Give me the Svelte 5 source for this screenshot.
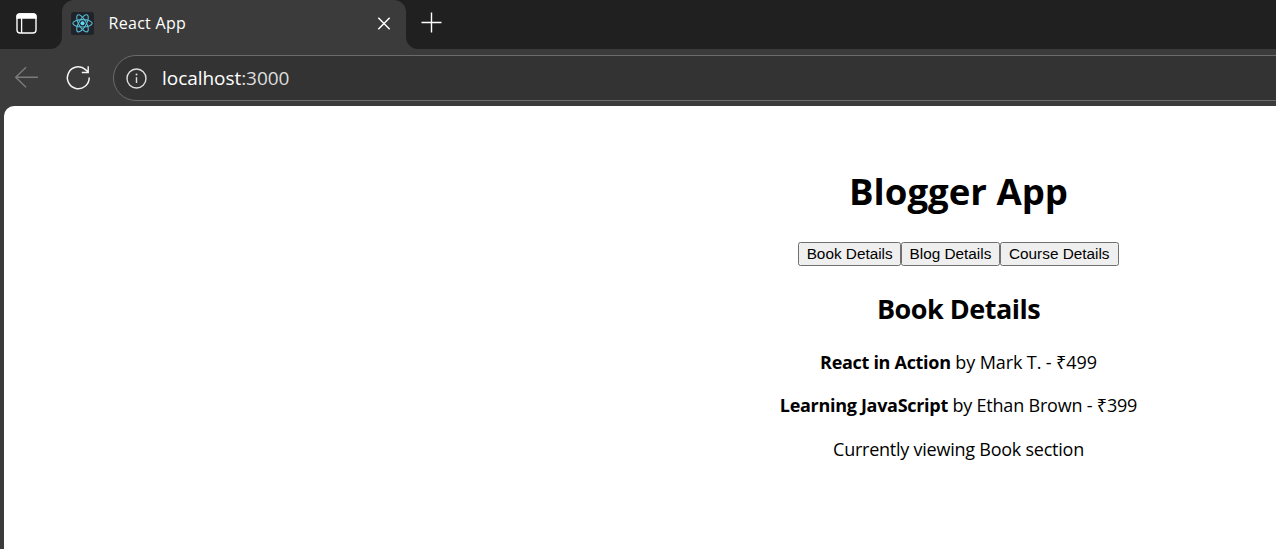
<script>
  const tabs = ['Book Details', 'Blog Details', 'Course Details'];
  const books = [
    { title: 'React in Action', author: 'Mark T.', price: 499 },
    { title: 'Learning JavaScript', author: 'Ethan Brown', price: 399 }
  ];
</script>

<div class="browser">
  <header class="tabstrip">
    <div class="workspace">
      <svg width="23" height="23" viewBox="0 0 23 23" fill="none" stroke="#fff" stroke-width="1.400">
        <rect x="2" y="2" width="19" height="19" rx="3.200" />
        <path d="M2 6V4.500Q2 2 4.500 2H18.500Q21 2 21 4.500V6Z" fill="#fff" />
        <path d="M6.600 6V21" stroke-width="1.300" />
      </svg>
    </div>
    <div class="tab">
      <svg class="favicon" width="23" height="23" viewBox="0 0 23 23" fill="none" stroke="#58bad4" stroke-width="1.100">
        <rect width="23" height="23" rx="2.500" fill="#20242a" stroke="none" />
        <ellipse cx="11.500" cy="11.300" rx="9.700" ry="3.700" />
        <ellipse cx="11.500" cy="11.300" rx="9.700" ry="3.700" transform="rotate(60 11.500 11.300)" />
        <ellipse cx="11.500" cy="11.300" rx="9.700" ry="3.700" transform="rotate(120 11.500 11.300)" />
        <circle cx="11.500" cy="11.300" r="2" fill="#61dafb" stroke="none" />
      </svg>
      <span class="tab-title">React App</span>
      <svg class="close" width="14" height="14" viewBox="0 0 14 14" stroke="#fff" stroke-width="1.500" fill="none">
        <path d="M1.300 1.800L12.700 13.200M12.700 1.800L1.300 13.200" />
      </svg>
    </div>
    <div class="newtab">
      <svg width="21" height="21" viewBox="0 0 21 21" stroke="#fff" stroke-width="1.400" fill="none">
        <path d="M10.500 0.500V20.500M0.500 10.500H20.500" />
      </svg>
    </div>
  </header>

  <nav class="toolbar">
    <svg class="back" width="24" height="24" viewBox="0 0 24 24" stroke="#7b7b7b" stroke-width="1.400" fill="none">
      <path d="M24 11.200H1.500M12 1.200L1.700 11.200L12 21.200" />
    </svg>
    <svg class="reload" width="26" height="26" viewBox="0 0 26 26" stroke="#f4f4f4" stroke-width="1.500" fill="none">
      <path d="M24.200 12.600A10.900 10.900 0 1 1 20.500 4.600L23.200 7M23.200 1.200V7.500H16.800" />
    </svg>
    <div class="address">
      <svg width="21" height="21" viewBox="0 0 21 21" fill="none" stroke="#dedede" stroke-width="1.400">
        <circle cx="10.500" cy="10.500" r="9.500" />
        <path d="M10.500 9.200V15" />
        <circle cx="10.500" cy="6.500" r="1" fill="#dedede" stroke="none" />
      </svg>
      <span class="url">localhost<span>:3000</span></span>
    </div>
  </nav>

  <main class="page">
    <div class="content">
      <h1>Blogger App</h1>
      <div class="buttons">
        {#each tabs as tab}
          <button>{tab}</button>
        {/each}
      </div>
      <h2>Book Details</h2>
      {#each books as book, i}
        <p class="book-{i}"><b>{book.title}</b>{` by ${book.author} - ₹${book.price}`}</p>
      {/each}
      <p class="status">Currently viewing Book section</p>
    </div>
  </main>
</div>

<style>
  :global(body) { margin: 0; overflow: hidden; }
  .browser {
    width: 1276px;
    height: 549px;
    overflow: hidden;
    display: flex;
    flex-direction: column;
    background: #3b3b3b;
    font-family: "Open Sans", "Noto Sans", sans-serif;
  }
  svg { display: block; flex: none; }
  .tabstrip { display: flex; height: 49px; flex: none; background: #3b3b3b; }
  .workspace {
    box-sizing: border-box;
    width: 62px;
    padding: 12px 0 0 15px;
    background: #202020;
    border-bottom-right-radius: 12px;
  }
  .tab {
    box-sizing: border-box;
    width: 344px;
    display: flex;
    align-items: center;
    padding: 0 15px 3px 9px;
    background: linear-gradient(#202020, #202020) 0 0 / 100% 12px no-repeat, #3b3b3b;
    position: relative;
    isolation: isolate;
  }
  .tab::before {
    content: "";
    position: absolute;
    inset: 0;
    z-index: -1;
    border-radius: 12px 12px 0 0;
    background: #3b3b3b;
  }
  .tab-title { flex: 1; margin-left: 14.500px; font-size: 16px; letter-spacing: 0.300px; color: #fff; white-space: nowrap; }
  .newtab {
    flex: 1;
    padding: 12px 0 0 15px;
    background: #202020;
    border-bottom-left-radius: 12px;
  }
  .toolbar { display: flex; align-items: center; height: 57px; flex: none; padding-left: 14px; }
  .reload { margin-left: 27px; }
  .address {
    box-sizing: border-box;
    display: flex;
    align-items: center;
    flex: 1;
    height: 46px;
    margin: 1px -30px 0 22px;
    padding-left: 12px;
    border: 1.500px solid #6b6b6b;
    border-radius: 23px;
    background: #333;
  }
  .url { margin-left: 15px; font-size: 19px; letter-spacing: -0.050px; color: #fff; white-space: nowrap; }
  .url span { color: #dedede; }
  .page {
    flex: 1;
    width: 1909px;
    margin-left: 4px;
    background: #fff;
    border-top-left-radius: 10px;
    color: #000;
  }
  .content { display: flex; flex-direction: column; align-items: center; padding-top: 60px; }
  h1, h2, p { margin: 0; white-space: nowrap; }
  h1 { height: 50px; line-height: 50px; font-size: 36.600px; font-weight: 700; }
  .buttons { display: flex; margin-top: 26px; }
  button {
    box-sizing: border-box;
    height: 24px;
    margin: 0;
    padding: 0 7.670px;
    border: 1px solid #6f6f6f;
    border-radius: 2.500px;
    background: #efefef;
    color: #000;
    font: 15.330px/20px "Liberation Sans", Arial, sans-serif;
  }
  button:first-child { padding: 0 7.200px; }
  button:last-child { padding: 0 8px; }
  h2 { height: 38px; line-height: 38px; margin-top: 24px; font-size: 27px; font-weight: 700; letter-spacing: -0.500px; }
  p { height: 25px; line-height: 25px; margin-top: 18px; font-size: 18px; letter-spacing: -0.200px; white-space: pre; }
  b { letter-spacing: -0.300px; }
  .book-0 { margin-top: 22px; letter-spacing: -0.100px; }
  .status { margin-top: 19px; letter-spacing: -0.240px; }
</style>
